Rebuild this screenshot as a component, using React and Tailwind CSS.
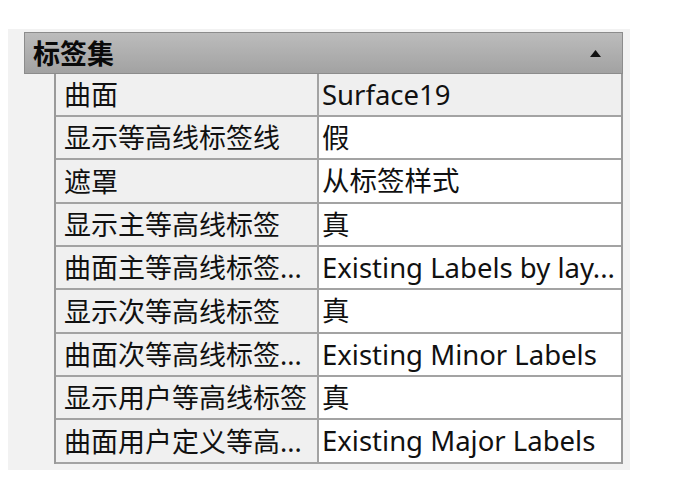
import React from 'react';

const rows = [
  { name: '曲面', value: 'Surface19', locked: true },
  { name: '显示等高线标签线', value: '假' },
  { name: '遮罩', value: '从标签样式' },
  { name: '显示主等高线标签', value: '真' },
  { name: '曲面主等高线标签...', value: 'Existing Labels by lay...' },
  { name: '显示次等高线标签', value: '真' },
  { name: '曲面次等高线标签...', value: 'Existing Minor Labels' },
  { name: '显示用户等高线标签', value: '真' },
  { name: '曲面用户定义等高...', value: 'Existing Major Labels' },
];

export default function App() {
  return (
    <div className="w-[674px] h-[482px] bg-white pt-[29px] pl-[8px] font-['Noto_Sans','Noto_Sans_CJK_SC',sans-serif] text-[#111]">
      <div className="w-[622px] h-[441px] bg-[#f2f2f2] pt-[3px] pl-[16px]">
        {/* Category header */}
        <div className="w-[599px] h-[42px] border border-[#8c8c8c] bg-gradient-to-b from-[#bcbcbc] to-[#a2a2a2] flex items-center justify-between pl-[8px] pr-[21px]">
          <span className="text-[27px] font-bold leading-none text-[#0a0a0a]">标签集</span>
          <svg width="11" height="7" viewBox="0 0 11 7">
            <path d="M5.5 0L11 7H0z" fill="#111" />
          </svg>
        </div>

        {/* Property rows */}
        <div className="ml-[30px] w-[569px] border-l-2 border-r-2 border-[#9a9a9a]">
          {rows.map((r, i) => (
            <div
              key={r.name}
              className={`grid grid-cols-[263px_1fr] ${i % 3 === 2 ? 'h-[44px]' : 'h-[43px]'} border-b-2 border-[#a3a3a3]`}
            >
              <div className="bg-[#f0f0f0] border-r-2 border-[#a3a3a3] pl-[8px] flex items-center text-[27px] leading-none whitespace-nowrap overflow-hidden">
                {r.name}
              </div>
              <div className={`${r.locked ? 'bg-[#efefef]' : 'bg-white'} pl-[3px] flex items-center text-[27.5px] leading-none whitespace-nowrap overflow-hidden`}>
                {r.value}
              </div>
            </div>
          ))}
        </div>
      </div>
    </div>
  );
}
